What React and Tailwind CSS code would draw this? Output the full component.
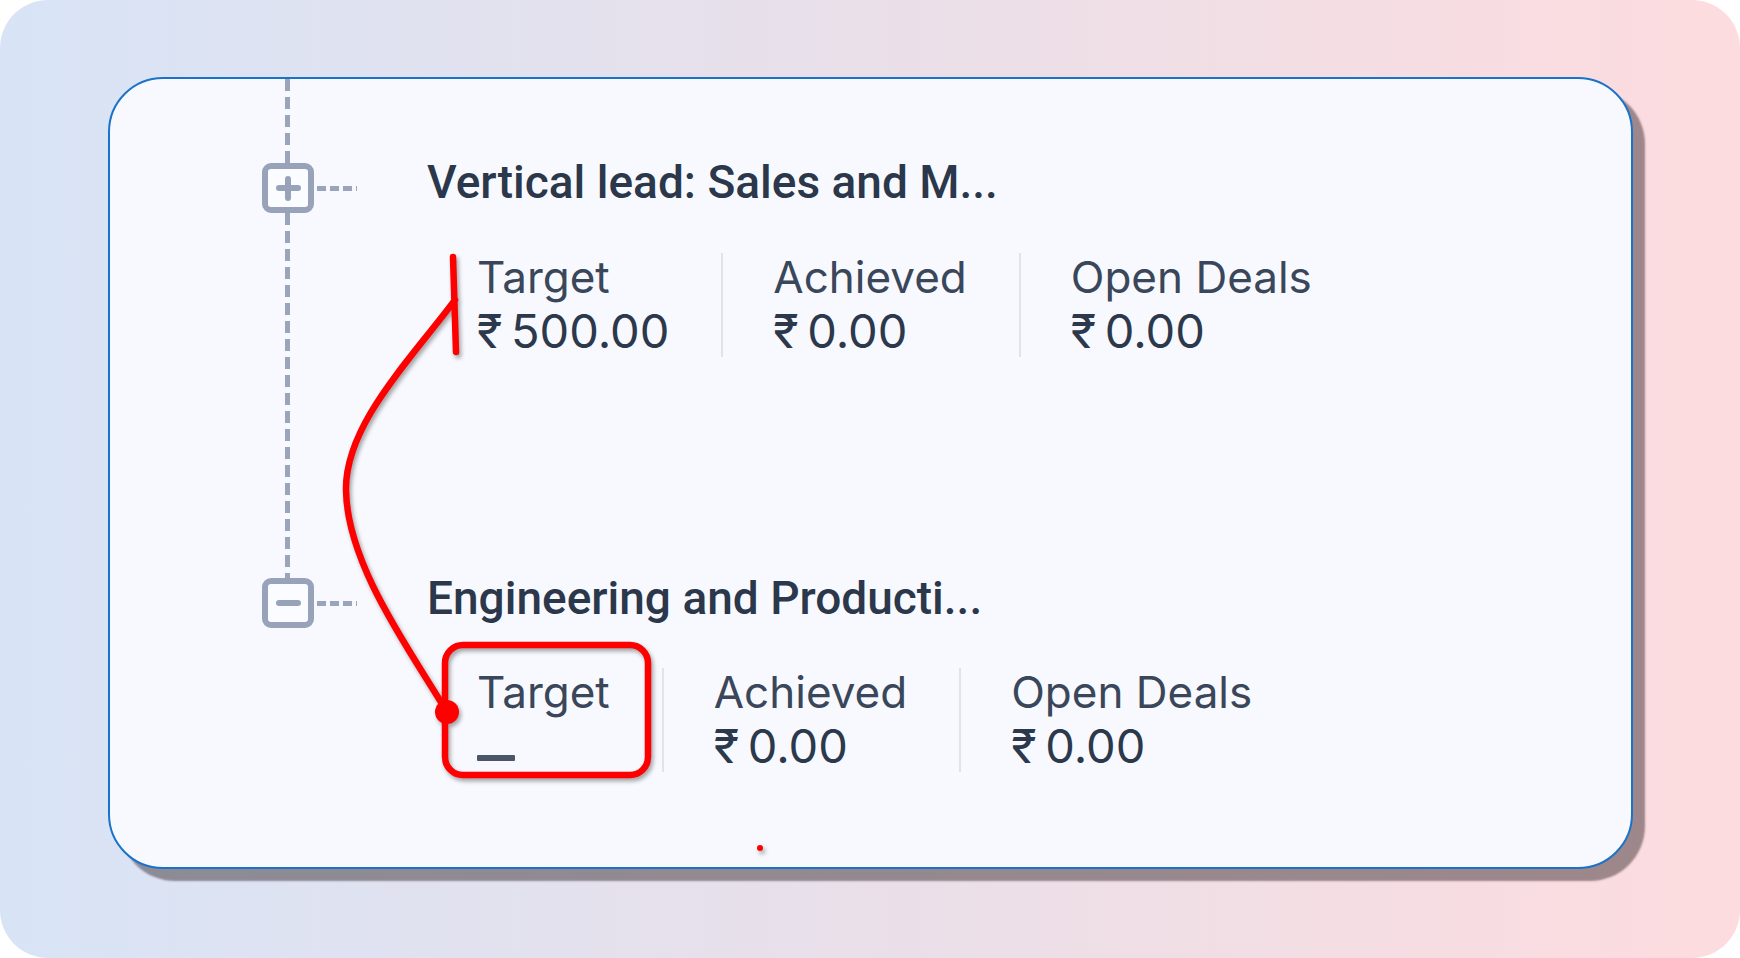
import React from "react";

const font = { fontFamily: "Roboto, 'Liberation Sans', sans-serif" };
const statFont = { fontFamily: "Inter, Roboto, 'Liberation Sans', sans-serif" };

const Stat = ({ label, value, first, dash }) => (
  <div
    style={statFont}
    className={
      first
        ? "flex flex-col pr-[52px]"
        : "flex flex-col border-l-2 border-[#dfe3ea] pl-[50px] pr-[52px]"
    }
  >
    <span className="text-[44px] leading-[48px] text-[#3a4659] whitespace-nowrap">
      {label}
    </span>
    <div className="mt-[4px] h-[52px]">
      {dash ? (
        <div className="mt-[35px] w-[38px] h-[6px] rounded-[1px] bg-[#4a5568]" />
      ) : (
        <span className="text-[47px] leading-[52px] text-[#2c384b] whitespace-nowrap">
          {value}
        </span>
      )}
    </div>
  </div>
);

const NodeBox = ({ open }) => (
  <div className="flex items-center">
    <div className="w-[52px] h-[50px] rounded-[9px] border-[6px] border-[#98a3ba] bg-[#fbfcff] flex items-center justify-center relative">
      <div className="w-[25px] h-[6px] rounded-full bg-[#98a3ba]" />
      {open && (
        <div className="absolute w-[6px] h-[25px] rounded-full bg-[#98a3ba]" />
      )}
    </div>
    <div className="ml-[3px] w-[40px] h-[5px] bg-[repeating-linear-gradient(to_right,#9aa5bb_0_9px,transparent_9px_13px)]" />
  </div>
);

const VLine = ({ h }) => (
  <div
    className={`ml-[23px] w-[5px] bg-[repeating-linear-gradient(to_bottom,#9aa5bb_0_12px,transparent_12px_18px)] ${h}`}
  />
);

export default function App() {
  return (
    <div className="w-[1740px] h-[958px] bg-white relative" style={font}>
      <div className="w-full h-full rounded-[48px] bg-linear-to-r from-[#d8e4f6] via-[#ebdfe8] via-55% to-[#fddcdf] pt-[77px] pl-[108px]">
        <div className="w-[1525px] h-[792px] rounded-[55px] border-2 border-[#1a73c9] bg-[#f7f9fe] shadow-[12px_12px_2px_rgba(45,30,35,0.45)] overflow-hidden flex">
          {/* tree rail */}
          <div className="ml-[152px] w-[95px] flex flex-col shrink-0">
            <VLine h="h-[84px]" />
            <NodeBox open />
            <VLine h="h-[365px]" />
            <NodeBox />
          </div>

          {/* nodes */}
          <div className="ml-[70px] mt-[78px] flex flex-col">
            <h3 className="text-[46px] leading-[50px] font-medium text-[#2b374a] whitespace-nowrap">
              Vertical lead: Sales and M...
            </h3>
            <div className="mt-[46px] ml-[50px] flex">
              <Stat first label="Target" value={"₹\u2009500.00"} />
              <Stat label="Achieved" value={"₹\u20090.00"} />
              <Stat label="Open Deals" value={"₹\u20090.00"} />
            </div>

            <h3 className="mt-[216px] text-[46px] leading-[50px] font-medium text-[#2b374a] whitespace-nowrap">
              Engineering and Producti...
            </h3>
            <div className="mt-[45px] ml-[50px] flex">
              <Stat first label="Target" dash />
              <Stat label="Achieved" value={"₹\u20090.00"} />
              <Stat label="Open Deals" value={"₹\u20090.00"} />
            </div>
          </div>
        </div>
      </div>

      {/* red annotation drawn over the card */}
      <svg
        className="absolute inset-0 pointer-events-none"
        width="1740"
        height="958"
        style={{ filter: "drop-shadow(2px 3px 2px rgba(0,0,0,0.35))" }}
      >
        <g fill="none" stroke="#ff0000" strokeWidth="6.5" strokeLinecap="round" strokeLinejoin="round">
          <path d="M453 257 L456 352" />
          <path d="M455 300 C410 360 345 425 346 490 C347 565 410 650 447 712" />
          <rect x="445" y="645" width="203" height="130" rx="18" />
        </g>
        <circle cx="447" cy="712" r="12" fill="#ff0000" />
        <circle cx="760" cy="848" r="3" fill="#ff0000" />
      </svg>
    </div>
  );
}
